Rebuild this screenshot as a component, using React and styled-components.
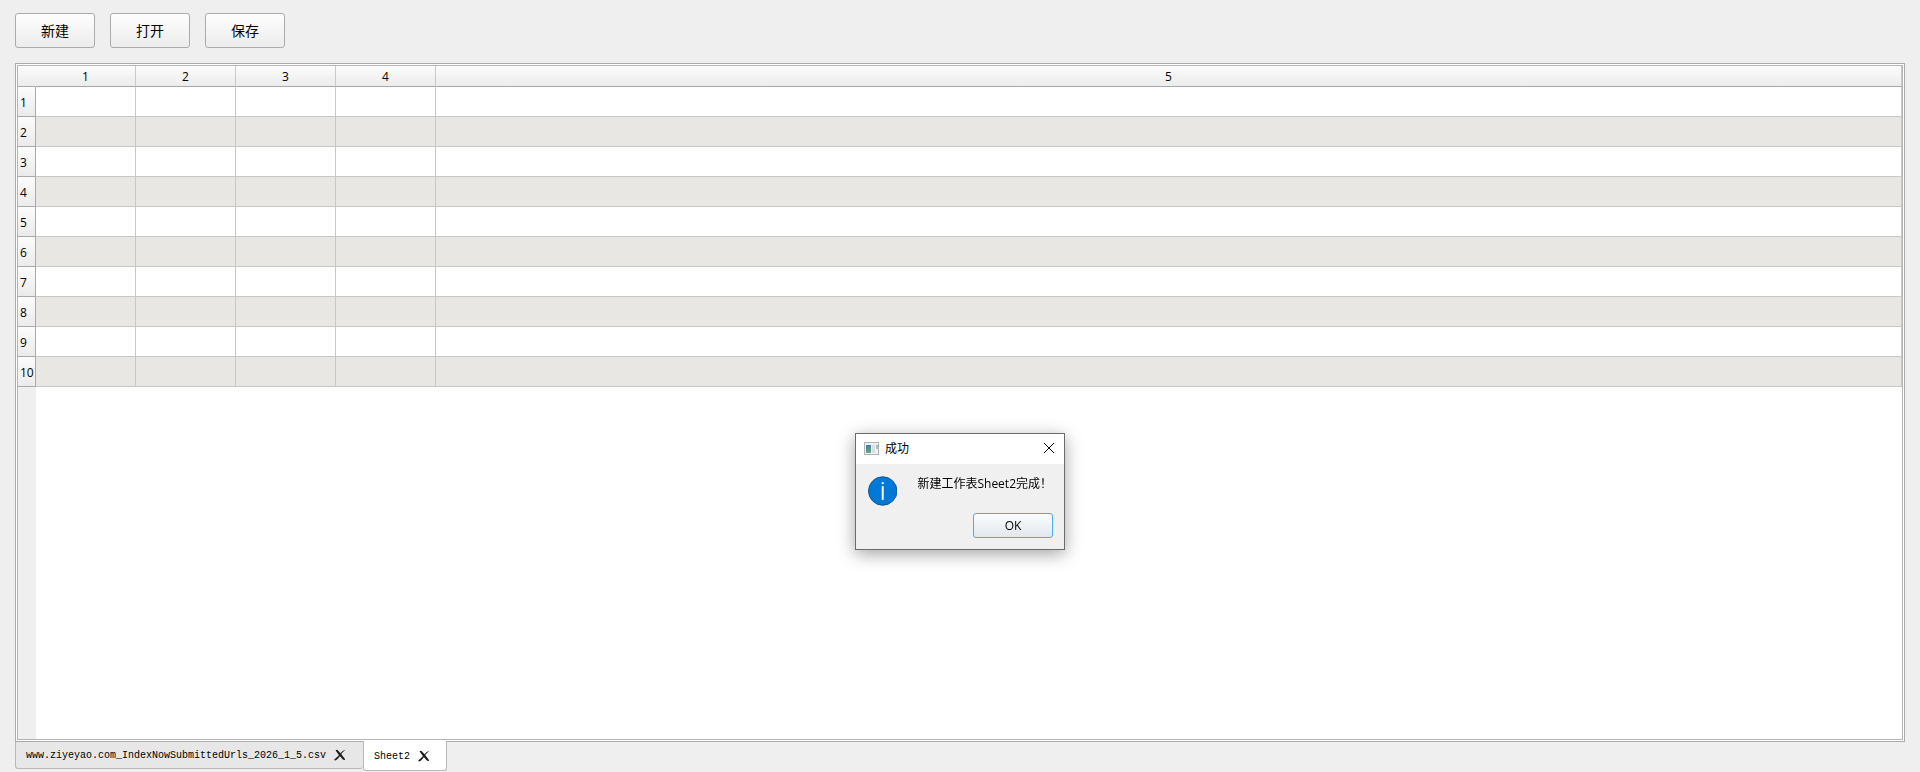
import { useState } from 'react';
import styled, { createGlobalStyle } from 'styled-components';

const uiFont = `"Open Sans", "Noto Sans CJK SC", sans-serif`;

const GlobalStyle = createGlobalStyle`
  * {
    box-sizing: border-box;
  }

  body {
    margin: 0;
    background: #efefef;
    color: #000;
    font-family: ${uiFont};
    font-size: 12px;
  }
`;

const Window = styled.main`
  display: flex;
  flex-direction: column;
  min-height: 100vh;
  padding: 13px 15px 1px;
`;

const Toolbar = styled.div`
  display: flex;
  gap: 15px;
  margin-bottom: 15px;
`;

const ToolButton = styled.button`
  width: 80px;
  height: 35px;
  padding: 0 0 2px;
  border: 1px solid #ababab;
  border-radius: 3px;
  background: linear-gradient(#fefefe, #ececec);
  color: #000;
  font-family: "Noto Sans CJK SC", sans-serif;
  font-size: 14px;
`;

const Pane = styled.section`
  flex: 1;
  display: flex;
  border: 1px solid #ababab;
  background: #fff;
  padding: 1px;
`;

const SheetView = styled.div`
  flex: 1;
  display: flex;
  flex-direction: column;
  border: 1px solid #b5b5b5;
`;

const Sheet = styled.table`
  width: 100%;
  table-layout: fixed;
  border-collapse: separate;
  border-spacing: 0;

  th {
    padding: 2px 0 0;
    font-weight: 400;
    line-height: 18px;
  }
`;

const HeaderRow = styled.tr`
  height: 21px;
  background: linear-gradient(#fcfcfc, #ebebeb);
`;

const ColumnHeader = styled.th`
  border-right: 1px solid ${({ $plain }) => ($plain ? 'transparent' : '#c8c8c8')};
  border-bottom: 1px solid #a9a9a9;
`;

const RowHeader = styled.th`
  border-right: 1px solid #a9a9a9;
  border-bottom: 1px solid #a9a9a9;
  background: linear-gradient(#fcfcfc, #ebebeb);
  text-align: left;
  text-indent: 2px;
`;

const SheetRow = styled.tr`
  height: 30px;
  background: ${({ $alternate }) => ($alternate ? '#e8e7e3' : '#fff')};
`;

const Cell = styled.td`
  padding: 0;
  border-right: 1px solid #c8c8c8;
  border-bottom: 1px solid #c8c8c8;
`;

const HeaderGutter = styled.div`
  flex: 1;
  width: 18px;
  background: #efefef;
`;

const TabBar = styled.nav`
  display: flex;
  align-items: flex-start;
  height: 29px;
`;

const Tab = styled.div`
  display: flex;
  align-items: center;
  gap: 8px;
  height: ${({ $active }) => ($active ? '30px' : '27px')};
  margin-top: ${({ $active }) => ($active ? '-1px' : '0')};
  padding: 0 ${({ $active }) => ($active ? '16px' : '17px')} 0 10px;
  border: 1px solid #b9b9b9;
  border-top: 0;
  border-right-width: ${({ $active }) => ($active ? '1px' : '0')};
  border-radius: 0 0 3px 3px;
  background: ${({ $active }) => ($active ? '#fff' : '#e7e7e7')};
`;

const TabLabel = styled.button`
  padding: 1px 0 0;
  border: 0;
  background: none;
  color: #000;
  font-family: "Liberation Mono", "Noto Sans CJK SC", monospace;
  font-size: 10px;
`;

const TabClose = styled.button`
  display: flex;
  padding: 0;
  border: 0;
  background: none;
`;

const DialogLayer = styled.div`
  position: fixed;
  inset: 0;
  display: flex;
  justify-content: center;
  align-items: flex-start;
  padding-top: 433px;
`;

const Dialog = styled.div`
  width: 210px;
  border: 1px solid #6b6b6b;
  background: #f0f0f0;
  box-shadow: 0 4px 16px rgba(0, 0, 0, 0.36);
`;

const TitleBar = styled.header`
  display: flex;
  align-items: center;
  height: 30px;
  padding: 0 9px 2px 8px;
  background: #fff;
`;

const DialogTitle = styled.h1`
  flex: 1;
  margin: 0 0 0 6px;
  font-size: 12px;
  font-weight: 400;
`;

const CloseButton = styled.button`
  display: flex;
  padding: 0;
  border: 0;
  background: none;
`;

const DialogBody = styled.div`
  display: flex;
  gap: 20px;
  padding: 12px 12px 7px;
`;

const Message = styled.p`
  margin: 0;
  line-height: 16px;
  white-space: nowrap;
`;

const DialogActions = styled.footer`
  display: flex;
  justify-content: flex-end;
  padding: 0 11px 11px;
`;

const OkButton = styled.button`
  width: 80px;
  height: 25px;
  padding: 0;
  border: 1px solid #45adf5;
  border-radius: 3px;
  background: linear-gradient(#fbfcfd, #e3e8ec);
  color: #000;
  font-family: ${uiFont};
  font-size: 12px;
`;

const CrossIcon = () => (
  <svg width="12" height="12" viewBox="0 0 12 12" fill="#1c1c1c">
    <path d="M1.6 1.4Q2.6 .4 3.8 1.3Q6.4 4 10.6 9.4Q11.6 10.6 10.8 11Q9.600 11.4 8.400 10Q5 6.400 1.6 1.4Z" />
    <path d="M11.6 .4Q8 3.600 6.600 6Q4.600 9.400 2.400 11Q.8 11.800 .3 11Q.2 10.200 1.400 9.400Q4 7.600 5.800 5Q8.200 1.800 11.6 .4Z" />
  </svg>
);

const AppIcon = () => (
  <svg width="15" height="13" viewBox="0 0 15 13">
    <defs>
      <linearGradient id="app-screen" x1="0" y1="0" x2="0" y2="1">
        <stop offset="0" stopColor="#4778a0" />
        <stop offset="1" stopColor="#62ad82" />
      </linearGradient>
    </defs>
    <rect x="0.5" y="0.5" width="14" height="12" fill="#eef0f1" stroke="#b0b4b6" />
    <rect x="2" y="3" width="5" height="8" fill="url(#app-screen)" />
    <rect x="8" y="3" width="3" height="8" fill="#dcdfe2" />
    <rect x="12" y="3" width="2" height="4" fill="#9bc4c0" />
  </svg>
);

const InfoIcon = () => (
  <svg width="30" height="30" viewBox="0 0 30 30">
    <circle cx="15" cy="15" r="14.5" fill="#0078d7" stroke="#10568f" />
    <rect x="14" y="6" width="2" height="2" fill="#fff" />
    <rect x="14" y="10" width="2" height="14" fill="#fff" />
  </svg>
);

const columns = [1, 2, 3, 4, 5];
const rows = [1, 2, 3, 4, 5, 6, 7, 8, 9, 10];
const initialTabs = ['www.ziyeyao.com_IndexNowSubmittedUrls_2026_1_5.csv', 'Sheet2'];

export default function App() {
  const [tabs, setTabs] = useState(initialTabs);
  const [activeTab, setActiveTab] = useState('Sheet2');
  const [dialogOpen, setDialogOpen] = useState(true);

  const closeTab = name => setTabs(prev => prev.filter(tab => tab !== name));
  const closeDialog = () => setDialogOpen(false);

  return (
    <>
      <GlobalStyle />
      <Window>
        <Toolbar>
          <ToolButton>新建</ToolButton>
          <ToolButton>打开</ToolButton>
          <ToolButton>保存</ToolButton>
        </Toolbar>

        <Pane>
          <SheetView>
            <Sheet>
              <colgroup>
                <col style={{ width: 18 }} />
                {columns.map(column => (
                  <col key={column} style={{ width: column < 5 ? 100 : 'auto' }} />
                ))}
              </colgroup>
              <thead>
                <HeaderRow>
                  <ColumnHeader $plain />
                  {columns.map(column => (
                    <ColumnHeader key={column} scope="col">{column}</ColumnHeader>
                  ))}
                </HeaderRow>
              </thead>
              <tbody>
                {rows.map(row => (
                  <SheetRow key={row} $alternate={row % 2 === 0}>
                    <RowHeader scope="row">{row}</RowHeader>
                    {columns.map(column => <Cell key={column} />)}
                  </SheetRow>
                ))}
              </tbody>
            </Sheet>
            <HeaderGutter />
          </SheetView>
        </Pane>

        <TabBar>
          {tabs.map(tab => (
            <Tab key={tab} $active={tab === activeTab}>
              <TabLabel onClick={() => setActiveTab(tab)}>{tab}</TabLabel>
              <TabClose aria-label="关闭" onClick={() => closeTab(tab)}>
                <CrossIcon />
              </TabClose>
            </Tab>
          ))}
        </TabBar>
      </Window>

      {dialogOpen && (
        <DialogLayer>
          <Dialog role="dialog" aria-labelledby="dialog-title">
            <TitleBar>
              <AppIcon />
              <DialogTitle id="dialog-title">成功</DialogTitle>
              <CloseButton aria-label="关闭" onClick={closeDialog}>
                <svg width="12" height="12" viewBox="0 0 12 12" stroke="#000">
                  <path d="M1 1l10 10M11 1L1 11" />
                </svg>
              </CloseButton>
            </TitleBar>
            <DialogBody>
              <InfoIcon />
              <Message>新建工作表Sheet2完成！</Message>
            </DialogBody>
            <DialogActions>
              <OkButton onClick={closeDialog}>OK</OkButton>
            </DialogActions>
          </Dialog>
        </DialogLayer>
      )}
    </>
  );
}
